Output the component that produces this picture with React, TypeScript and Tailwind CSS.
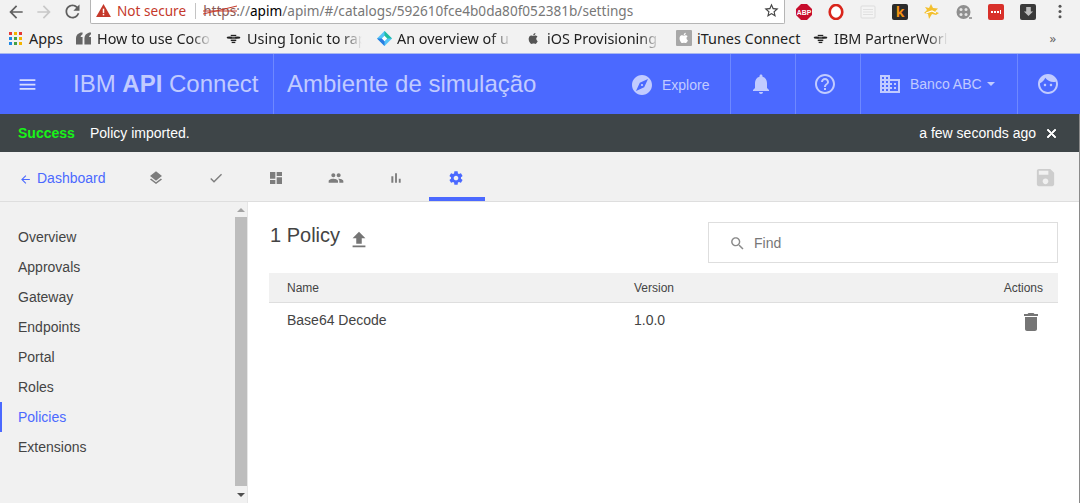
import React from "react";

const P = {
  menu: "M3 18h18v-2H3v2zm0-5h18v-2H3v2zm0-7v2h18V6H3z",
  explore: "M12 10.9c-.61 0-1.1.49-1.1 1.1s.49 1.1 1.1 1.1c.61 0 1.1-.49 1.1-1.1s-.49-1.1-1.1-1.1zM12 2C6.48 2 2 6.48 2 12s4.48 10 10 10 10-4.48 10-10S17.52 2 12 2zm2.19 12.19L6 18l3.81-8.19L18 6l-3.81 8.19z",
  bell: "M12 22c1.1 0 2-.9 2-2h-4c0 1.1.89 2 2 2zm6-6v-5c0-3.07-1.64-5.64-4.5-6.32V4c0-.83-.67-1.5-1.5-1.5s-1.5.67-1.5 1.5v.68C7.63 5.36 6 7.92 6 11v5l-2 2v1h16v-1l-2-2z",
  help: "M11 18h2v-2h-2v2zm1-16C6.48 2 2 6.48 2 12s4.48 10 10 10 10-4.48 10-10S17.52 2 12 2zm0 18c-4.41 0-8-3.59-8-8s3.59-8 8-8 8 3.59 8 8-3.59 8-8 8zm0-14c-2.21 0-4 1.79-4 4h2c0-1.1.9-2 2-2s2 .9 2 2c0 2-3 1.75-3 5h2c0-2.25 3-2.5 3-5 0-2.21-1.79-4-4-4z",
  domain: "M12 7V3H2v18h20V7H12zM6 19H4v-2h2v2zm0-4H4v-2h2v2zm0-4H4V9h2v2zm0-4H4V5h2v2zm4 12H8v-2h2v2zm0-4H8v-2h2v2zm0-4H8V9h2v2zm0-4H8V5h2v2zm10 12h-8v-2h2v-2h-2v-2h2v-2h-2V9h8v10zm-2-8h-2v2h2v-2zm0 4h-2v2h2v-2z",
  face: "M9 11.75c-.69 0-1.25.56-1.25 1.25s.56 1.25 1.25 1.25 1.25-.56 1.25-1.25-.56-1.25-1.25-1.25zm6 0c-.69 0-1.25.56-1.25 1.25s.56 1.25 1.25 1.25 1.25-.56 1.25-1.25-.56-1.25-1.25-1.25zM12 2C6.48 2 2 6.48 2 12s4.48 10 10 10 10-4.48 10-10S17.52 2 12 2zm0 18c-4.41 0-8-3.59-8-8 0-.29.02-.58.05-.86 2.36-1.05 4.23-2.98 5.21-5.37C11.07 8.33 14.05 10 17.42 10c.78 0 1.53-.09 2.25-.26.21.71.33 1.47.33 2.26 0 4.41-3.59 8-8 8z",
  layers: "M11.99 18.54l-7.37-5.73L3 14.07l9 7 9-7-1.63-1.27-7.38 5.74zM12 16l7.36-5.73L21 9l-9-7-9 7 1.63 1.27L12 16z",
  check: "M9 16.17L4.83 12l-1.42 1.41L9 19 21 7l-1.41-1.41z",
  dash: "M3 13h8V3H3v10zm0 8h8v-6H3v6zm10 0h8V11h-8v10zm0-18v6h8V3h-8z",
  people: "M16 11c1.66 0 2.99-1.34 2.99-3S17.66 5 16 5c-1.66 0-3 1.34-3 3s1.34 3 3 3zm-8 0c1.66 0 2.99-1.34 2.99-3S9.66 5 8 5C6.34 5 5 6.34 5 8s1.34 3 3 3zm0 2c-2.33 0-7 1.17-7 3.5V19h14v-2.5c0-2.33-4.67-3.5-7-3.5zm8 0c-.29 0-.62.02-.97.05 1.16.84 1.97 1.97 1.97 3.45V19h6v-2.5c0-2.33-4.67-3.5-7-3.5z",
  bars: "M5 9.2h3V19H5zM10.6 5h2.8v14h-2.8zm5.6 8H19v6h-2.8z",
  gear: "M19.43 12.98c.04-.32.07-.64.07-.98s-.03-.66-.07-.98l2.11-1.65c.19-.15.24-.42.12-.64l-2-3.46c-.12-.22-.39-.3-.61-.22l-2.49 1c-.52-.4-1.08-.73-1.69-.98l-.38-2.65C14.46 2.18 14.25 2 14 2h-4c-.25 0-.46.18-.49.42l-.38 2.65c-.61.25-1.17.59-1.69.98l-2.49-1c-.23-.09-.49 0-.61.22l-2 3.46c-.13.22-.07.49.12.64l2.11 1.65c-.04.32-.07.65-.07.98s.03.66.07.98l-2.11 1.65c-.19.15-.24.42-.12.64l2 3.46c.12.22.39.3.61.22l2.49-1c.52.4 1.08.73 1.69.98l.38 2.65c.03.24.24.42.49.42h4c.25 0 .46-.18.49-.42l.38-2.65c.61-.25 1.17-.59 1.69-.98l2.49 1c.23.09.49 0 .61-.22l2-3.46c.12-.22.07-.49-.12-.64l-2.11-1.65zM12 15.5c-1.93 0-3.5-1.57-3.5-3.5s1.57-3.5 3.5-3.5 3.5 1.57 3.5 3.5-1.57 3.5-3.5 3.5z",
  save: "M17 3H5c-1.11 0-2 .9-2 2v14c0 1.1.89 2 2 2h14c1.1 0 2-.9 2-2V7l-4-4zm-5 16c-1.66 0-3-1.34-3-3s1.34-3 3-3 3 1.34 3 3-1.34 3-3 3zm3-10H5V5h10v4z",
  upload: "M9 16h6v-6h4l-7-7-7 7h4zm-4 2h14v2H5z",
  del: "M6 19c0 1.1.9 2 2 2h8c1.1 0 2-.9 2-2V7H6v12zM19 4h-3.5l-1-1h-5l-1 1H5v2h14V4z",
  search: "M15.5 14h-.79l-.28-.27C15.41 12.59 16 11.11 16 9.5 16 5.91 13.09 3 9.5 3S3 5.91 3 9.5 5.91 16 9.5 16c1.61 0 3.09-.59 4.23-1.57l.27.28v.79l5 4.99L20.49 19l-4.99-5zm-6 0C7.01 14 5 11.99 5 9.5S7.01 5 9.5 5 14 7.01 14 9.5 11.99 14 9.5 14z",
  back: "M20 11H7.83l5.59-5.59L12 4l-8 8 8 8 1.41-1.41L7.83 13H20v-2z",
  close: "M19 6.41L17.59 5 12 10.59 6.41 5 5 6.41 10.59 12 5 17.59 6.41 19 12 13.41 17.59 19 19 17.59 13.41 12z",
  star: "M22 9.24l-7.19-.62L12 2 9.19 8.63 2 9.24l5.46 4.73L5.82 21 12 17.27 18.18 21l-1.63-7.03L22 9.24zM12 15.4l-3.76 2.27 1-4.28-3.32-2.88 4.38-.38L12 6.1l1.71 4.04 4.38.38-3.32 2.88 1 4.28L12 15.4z",
  refresh: "M17.65 6.35C16.2 4.9 14.21 4 12 4c-4.42 0-7.99 3.58-7.99 8s3.57 8 7.99 8c3.73 0 6.84-2.55 7.73-6h-2.08c-.82 2.33-3.04 4-5.65 4-3.31 0-6-2.69-6-6s2.69-6 6-6c1.66 0 3.14.69 4.22 1.78L13 11h7V4l-2.35 2.35z",
  apple: "M17.05 12.54c-.03-2.6 2.12-3.85 2.22-3.91-1.21-1.77-3.09-2.01-3.76-2.04-1.6-.16-3.12.94-3.93.94-.81 0-2.06-.92-3.39-.89-1.74.03-3.35 1.01-4.25 2.57-1.81 3.14-.46 7.8 1.3 10.35.86 1.25 1.89 2.65 3.24 2.6 1.3-.05 1.79-.84 3.36-.84 1.57 0 2.01.84 3.39.81 1.4-.02 2.28-1.27 3.14-2.53.99-1.45 1.4-2.85 1.42-2.92-.03-.01-2.72-1.04-2.74-4.14zM14.47 4.9c.72-.87 1.2-2.08 1.07-3.28-1.03.04-2.28.69-3.02 1.55-.66.77-1.24 2-1.09 3.18 1.15.09 2.32-.58 3.04-1.45z",
};

function I({ d, className }: { d: string; className?: string }) {
  return (
    <svg viewBox="0 0 24 24" className={className} fill="currentColor" aria-hidden="true">
      <path d={d} />
    </svg>
  );
}

function Bee({ className }: { className?: string }) {
  return (
    <svg viewBox="0 0 16 12" className={className} aria-hidden="true">
      <ellipse cx="3.5" cy="5" rx="3" ry="1.3" fill="#222" />
      <ellipse cx="12.5" cy="5" rx="3" ry="1.3" fill="#222" />
      <rect x="5" y="2" width="6" height="1.6" fill="#222" />
      <rect x="4.5" y="4.6" width="7" height="1.6" fill="#222" />
      <rect x="5" y="7.2" width="6" height="1.6" fill="#222" />
      <rect x="6" y="9.6" width="4" height="1.4" fill="#222" />
    </svg>
  );
}

const fade = "whitespace-nowrap [mask-image:linear-gradient(to_right,black_82%,transparent_100%)]";

function Bookmark({ icon, label, w, gap = "gap-[6px]", mr }: { icon: React.ReactNode; label: string; w: string; gap?: string; mr: string }) {
  return (
    <div className={`flex items-center ${gap} ${mr}`}>
      {icon}
      <span className={`${w} ${fade}`}>{label}</span>
    </div>
  );
}

function AppsGrid() {
  const colors = ["#e53935", "#f4b400", "#e53935", "#1e88e5", "#43a047", "#f4b400", "#1e88e5", "#43a047", "#f4b400"];
  return (
    <div className="grid grid-cols-3 gap-[2px] w-[13px] h-[13px]">
      {colors.map((c, i) => (
        <span key={i} style={{ backgroundColor: c }} />
      ))}
    </div>
  );
}

function Chrome() {
  return (
    <div className="h-[54px] bg-[#f2f2f2] border-b border-[#a9b8f0] [font-family:'Noto_Sans','Open_Sans',sans-serif] shrink-0">
      <div className="h-[24px] flex items-start">
        <div className="w-[90px] h-[23px] flex items-center pl-[6px] gap-[8px] text-[#5f5f5f]">
          <I d={P.back} className="w-[20px] h-[20px] text-[#5f5f5f]" />
          <I d={P.back} className="w-[20px] h-[20px] rotate-180 text-[#c8c8c8]" />
          <I d={P.refresh} className="w-[21px] h-[21px] text-[#5f5f5f]" />
        </div>
        <div className="w-[695px] h-[24px] bg-white border border-t-0 border-[#b5b5b5] rounded-b-[2px] flex items-center pl-[5px] text-[13.6px] leading-none pb-[2px]">
          <svg viewBox="0 0 16 14" className="w-[15px] h-[13px] mr-[6px]" aria-hidden="true">
            <path d="M8 0L16 14H0z" fill="#c5392b" />
            <rect x="7.2" y="5" width="1.6" height="4.6" fill="#fff" />
            <rect x="7.2" y="10.6" width="1.6" height="1.6" fill="#fff" />
          </svg>
          <span className="text-[#c5392b] whitespace-nowrap">Not secure</span>
          <span className="w-px h-[16px] bg-[#c4c4c4] ml-[9px] mr-[7px]" />
          <span className="relative text-[#8a5a55]">
            https
            <svg viewBox="0 0 34 12" className="absolute left-0 top-[0px] w-[34px] h-[12px]" aria-hidden="true">
              <path d="M0 10L34 2M0 7h34" stroke="#c5392b" strokeWidth="1" fill="none" />
            </svg>
          </span>
          <span className="text-[#777]">://</span>
          <span className="text-black">apim</span>
          <span className="text-[#777] whitespace-nowrap">/apim/#/catalogs/592610fce4b0da80f052381b/settings</span>
          <I d={P.star} className="w-[17px] h-[17px] ml-auto mr-[4px] text-[#444]" />
        </div>
        <div className="flex-1 h-[23px] flex items-center pl-[11px] gap-[16px]">
          <svg viewBox="0 0 16 16" className="w-[16px] h-[16px]" aria-hidden="true">
            <path d="M5 0h6l5 5v6l-5 5H5l-5-5V5z" fill="#c70d2c" />
            <text x="8" y="10.5" fontSize="6.8" fontWeight="700" textAnchor="middle" fill="#fff" fontFamily="Liberation Sans, sans-serif">ABP</text>
          </svg>
          <svg viewBox="0 0 16 16" className="w-[16px] h-[16px]" aria-hidden="true">
            <ellipse cx="8" cy="8" rx="6.3" ry="7" fill="#fff" stroke="#d9261c" strokeWidth="2.6" />
            <rect x="5.5" y="3" width="5" height="10" rx="2" fill="#fff" />
          </svg>
          <svg viewBox="0 0 16 16" className="w-[16px] h-[16px]" aria-hidden="true">
            <rect x="1" y="2" width="14" height="12" rx="1" fill="#f4f4f4" stroke="#dcdcdc" />
            <path d="M3 5.5h10M3 8h10M3 10.5h10" stroke="#e0e0e0" />
          </svg>
          <div className="w-[16px] h-[16px] rounded-[2px] bg-[#2b2b2b] text-[#f29111] text-[14px] font-bold leading-[16px] text-center">k</div>
          <svg viewBox="0 0 16 16" className="w-[16px] h-[16px]" aria-hidden="true">
            <path d="M7 0l2 4 5 .5-3 3 4 1.5-3 2-4-1-3 5-1-5-4-1 3-3-2-3 4 1z" fill="#f3c02f" />
            <path d="M2 9l6-2 4 2" stroke="#fff" strokeWidth="1.2" fill="none" />
          </svg>
          <svg viewBox="0 0 16 16" className="w-[16px] h-[16px]" aria-hidden="true">
            <circle cx="7.5" cy="8" r="7" fill="#8f8f8f" />
            <circle cx="5" cy="5.5" r="1.5" fill="#e6e6e6" />
            <circle cx="10" cy="5.5" r="1.5" fill="#e6e6e6" />
            <circle cx="5" cy="10.5" r="1.5" fill="#e6e6e6" />
            <circle cx="10" cy="10.5" r="1.5" fill="#e6e6e6" />
            <path d="M13 14h3" stroke="#555" />
          </svg>
          <div className="w-[16px] h-[16px] rounded-[2px] bg-[#d8302a] flex items-center justify-center gap-[1px]">
            <span className="w-[2px] h-[2px] bg-white" />
            <span className="w-[2px] h-[2px] bg-white" />
            <span className="w-[2px] h-[2px] bg-white" />
            <span className="w-[1px] h-[4px] bg-white" />
          </div>
          <div className="w-[16px] h-[16px] rounded-[2px] bg-[#3a3a3a] flex items-center justify-center">
            <svg viewBox="0 0 12 12" className="w-[11px] h-[11px]" aria-hidden="true">
              <path d="M3.5 1h5v5H11L6 11 1 6h2.5z" fill="#bdbdbd" />
            </svg>
          </div>
          <svg viewBox="0 0 4 16" className="w-[4px] h-[15px] ml-[6px]" aria-hidden="true">
            <circle cx="2" cy="2.5" r="1.6" fill="#555" />
            <circle cx="2" cy="8" r="1.6" fill="#555" />
            <circle cx="2" cy="13.5" r="1.6" fill="#555" />
          </svg>
        </div>
      </div>
      <div className="h-[29px] flex items-center pl-[9px] text-[14.4px] text-[#222]">
        <div className="flex items-center gap-[7px] w-[67px]">
          <AppsGrid />
          <span>Apps</span>
        </div>
        <Bookmark
          mr="mr-[14px]"
          w="w-[115px]"
          icon={<svg viewBox="0 0 16 13" className="w-[15px] h-[13px]" aria-hidden="true"><path d="M0 6C0 3 2 1 5 0h2v2C5.5 3 5 4 5 5h2v8H0zM9 6c0-3 2-5 5-6h2v2c-1.5 1-2 2-2 3h2v8H9z" fill="#666" /></svg>}
          label="How to use Coco"
        />
        <Bookmark mr="mr-[15px]" w="w-[115px]" icon={<Bee className="w-[15px] h-[11px]" />} label="Using Ionic to rap" />
        <Bookmark
          mr="mr-[15px]"
          gap="gap-[5px]"
          w="w-[115px]"
          icon={<svg viewBox="0 0 16 16" className="w-[15px] h-[15px]" aria-hidden="true"><path d="M8 0l8 8-8 8-8-8z" fill="#54c5f8" /><path d="M8 0l8 8H8z" fill="#1fbf9f" /><path d="M0 8h8v8z" fill="#2a7de1" /><rect x="6" y="6" width="4" height="4" transform="rotate(45 8 8)" fill="#fff" /></svg>}
          label="An overview of u"
        />
        <Bookmark mr="mr-[16px]" gap="gap-[7px]" w="w-[113px]" icon={<I d={P.apple} className="w-[13px] h-[15px] text-[#555]" />} label="iOS Provisioning" />
        <div className="flex items-center gap-[5px] mr-[12px]">
          <div className="w-[16px] h-[16px] bg-[#a8a8a8] flex items-center justify-center rounded-[1px]">
            <I d={P.apple} className="w-[12px] h-[12px] text-white" />
          </div>
          <span className="w-[104px] whitespace-nowrap">iTunes Connect</span>
        </div>
        <Bookmark mr="mr-0" w="w-[114px]" icon={<Bee className="w-[15px] h-[11px]" />} label="IBM PartnerWorl" />
        <span className="ml-auto mr-[24px] text-[#666] text-[13px]">»</span>
      </div>
    </div>
  );
}

function HeaderCell({ w, children }: { w: string; children: React.ReactNode }) {
  return <div className={`${w} h-full border-l border-[#6e88ff] flex items-center justify-center`}>{children}</div>;
}

function Header() {
  return (
    <div className="h-[60px] bg-[#4b69ff] flex items-center text-[#c1cbff] shrink-0">
      <div className="w-[73px] pl-[17px]">
        <I d={P.menu} className="w-[21px] h-[21px] text-[#d9deff]" />
      </div>
      <div className="w-[200px] text-[24px] whitespace-nowrap pb-[1px]">
        IBM <b className="font-bold">API</b> Connect
      </div>
      <div className="flex-1 h-full border-l border-[#6e88ff] flex items-center pl-[13px] text-[24px] whitespace-nowrap pb-[1px]">
        Ambiente de simulação
      </div>
      <div className="w-[99px] flex items-center gap-[8px] pt-[2px] text-[14px] -translate-x-[1px]">
        <I d={P.explore} className="w-[24px] h-[24px]" />
        <span>Explore</span>
      </div>
      <HeaderCell w="w-[65px]"><I d={P.bell} className="w-[24px] h-[24px] -translate-x-[2px]" /></HeaderCell>
      <HeaderCell w="w-[65px]"><I d={P.help} className="w-[24px] h-[24px] -translate-x-[3px]" /></HeaderCell>
      <div className="w-[157px] h-full border-l border-[#6e88ff] flex items-center pl-[17px] text-[14px]">
        <I d={P.domain} className="w-[24px] h-[24px]" />
        <span className="ml-[8px]">Banco ABC</span>
        <span className="ml-[5px] w-0 h-0 border-x-[4px] border-x-transparent border-t-[4px] border-t-[#c1cbff]" />
      </div>
      <HeaderCell w="w-[63px]"><I d={P.face} className="w-[24px] h-[24px] -translate-x-[1px]" /></HeaderCell>
    </div>
  );
}

function Notice() {
  return (
    <div className="h-[38px] bg-[#3e4548] flex items-center pl-[18px] pr-[20px] text-[14px] text-white shrink-0">
      <b className="font-bold text-[#18f318] w-[72px]">Success</b>
      <span>Policy imported.</span>
      <span className="ml-auto">a few seconds ago</span>
      <I d={P.close} className="w-[15px] h-[15px] ml-[8px] stroke-current stroke-[1.5]" />
    </div>
  );
}

function Tab({ d, active }: { d: string; active?: boolean }) {
  return (
    <div className={`w-[56px] mr-[4px] h-full flex items-center justify-center pt-[6px] ${active ? "border-b-4 border-[#4b69ff] text-[#4b69ff]" : "border-b-4 border-transparent text-[#7d7d7d]"}`}>
      <I d={d} className="w-[16px] h-[16px] -translate-x-[1px]" />
    </div>
  );
}

function TabBar() {
  return (
    <div className="h-[50px] bg-[#f1f1f1] border-b border-[#dedede] flex items-center pl-[19px] pr-[22px] shrink-0">
      <div className="w-[110px] flex items-center gap-[5px] text-[#4b69ff] text-[14px] pt-[4px]">
        <I d={P.back} className="w-[13px] h-[13px] mt-[1px]" />
        <span>Dashboard</span>
      </div>
      <Tab d={P.layers} />
      <Tab d={P.check} />
      <Tab d={P.dash} />
      <Tab d={P.people} />
      <Tab d={P.bars} />
      <Tab d={P.gear} active />
      <I d={P.save} className="w-[23px] h-[23px] ml-auto mt-[2px] text-[#cdcdcd]" />
    </div>
  );
}

const items = ["Overview", "Approvals", "Gateway", "Endpoints", "Portal", "Roles", "Policies", "Extensions"];

function Sidebar() {
  return (
    <div className="w-[248px] h-full bg-[#f1f1f1] border-r border-[#e6e6e6] flex shrink-0">
      <div className="w-[235px] pt-[20px] text-[14px] text-[#444]">
        {items.map((t) => (
          <div
            key={t}
            className={`h-[30px] flex items-center pl-[16px] border-l-2 ${t === "Policies" ? "border-[#4b69ff] text-[#4b69ff]" : "border-transparent"}`}
          >
            {t}
          </div>
        ))}
      </div>
      <div className="w-[12px] flex flex-col items-center">
        <div className="h-[15px] flex items-center justify-center">
          <span className="w-0 h-0 border-x-[4px] border-x-transparent border-b-[4px] border-b-[#a3a3a3]" />
        </div>
        <div className="w-full h-[269px] bg-[#bdbdbd]" />
        <div className="h-[16px] flex items-center justify-center pt-[2px]">
          <span className="w-0 h-0 border-x-[4px] border-x-transparent border-t-[4px] border-t-[#505050]" />
        </div>
      </div>
    </div>
  );
}

function Main() {
  return (
    <div className="flex-1 h-full bg-white pl-[21px] pr-[21px] text-[#444]">
      <div className="h-[71px] flex items-start">
        <div className="flex items-center pt-[21px] pl-[1px]">
          <span className="text-[20px] leading-[24px] -translate-y-[2px]">1 Policy</span>
          <I d={P.upload} className="w-[22px] h-[22px] ml-[8px] mt-[6px] text-[#757575]" />
        </div>
        <div className="ml-auto mt-[20px] w-[350px] h-[41px] border border-[#dedede] flex items-center pl-[20px] pt-[1px]">
          <I d={P.search} className="w-[17px] h-[17px] text-[#8a8a8a]" />
          <span className="ml-[8px] text-[14px] text-[#777]">Find</span>
        </div>
      </div>
      <div className="h-[30px] bg-[#f1f1f1] border-b border-[#dedede] grid grid-cols-[347px_1fr_auto] items-center pl-[18px] pr-[15px] text-[12px]">
        <span>Name</span>
        <span>Version</span>
        <span>Actions</span>
      </div>
      <div className="h-[34px] grid grid-cols-[347px_1fr_auto] items-center pl-[18px] pr-[15px] text-[14px]">
        <span>Base64 Decode</span>
        <span>1.0.0</span>
        <I d={P.del} className="w-[24px] h-[24px] text-[#757575] mt-[3px]" />
      </div>
    </div>
  );
}

export default function App() {
  return (
    <div className="w-[1080px] h-[503px] overflow-hidden flex flex-col bg-white [font-family:'Liberation_Sans',Arial,sans-serif]">
      <Chrome />
      <Header />
      <div className="flex-1 min-h-0 flex flex-col border-r border-[#8a8a8a]">
        <Notice />
        <TabBar />
        <div className="flex-1 min-h-0 flex">
          <Sidebar />
          <Main />
        </div>
      </div>
    </div>
  );
}
